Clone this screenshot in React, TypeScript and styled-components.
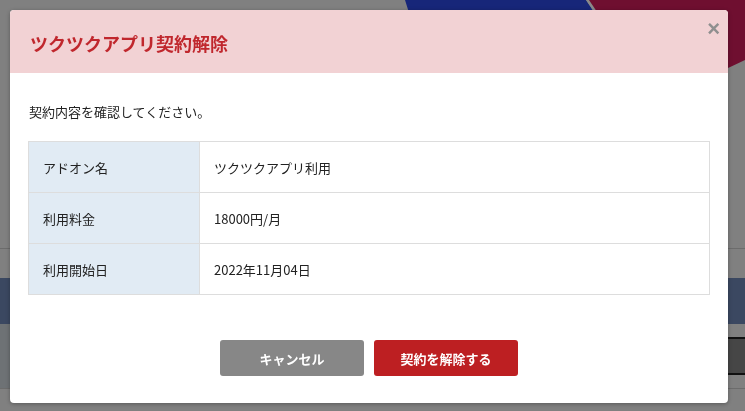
import styled, { createGlobalStyle } from "styled-components";

const GlobalStyle = createGlobalStyle`
  html, body {
    margin: 0;
    padding: 0;
  }
  body {
    font-family: "Noto Sans CJK JP", "Noto Sans", sans-serif;
    color: #333;
  }
`;

const rows = [
  { label: "アドオン名", value: "ツクツクアプリ利用" },
  { label: "利用料金", value: "18000円/月" },
  { label: "利用開始日", value: "2022年11月04日" },
];

const HeroArt = () => (
  <svg width="745" height="248" viewBox="0 0 745 248">
    <polygon points="405,0 586,0 640,80 430,80" fill="#172679" />
    <polygon points="586,0 589,0 643,80 640,80" fill="#8a8a8a" />
    <path d="M589,0 L745,0 L745,60 Q720,72 690,85 L643,80 Z" fill="#6f0f30" />
  </svg>
);

export default function App() {
  return (
    <>
      <GlobalStyle />
      <Page>
        <Hero>
          <HeroArt />
        </Hero>
        <Rule />
        <Gap />
        <NavBar />
        <Section>
          <SidePanel />
          <Filler>
            <DarkBox />
          </Filler>
        </Section>
        <Rule />
      </Page>

      <Modal>
        <Header>
          <Title>ツクツクアプリ契約解除</Title>
          <CloseButton aria-label="close">×</CloseButton>
        </Header>
        <Body>
          <Lead>契約内容を確認してください。</Lead>
          <Table>
            <tbody>
              {rows.map((r) => (
                <tr key={r.label}>
                  <LabelCell>{r.label}</LabelCell>
                  <ValueCell>{r.value}</ValueCell>
                </tr>
              ))}
            </tbody>
          </Table>
          <Actions>
            <Button $variant="cancel">キャンセル</Button>
            <Button $variant="danger">契約を解除する</Button>
          </Actions>
        </Body>
      </Modal>
    </>
  );
}

const Page = styled.div`
  width: 745px;
  height: 411px;
  overflow: hidden;
  background: #808080;
  display: flex;
  flex-direction: column;
`;

const Hero = styled.div`
  height: 248px;
  flex: none;
  svg {
    display: block;
  }
`;

const Rule = styled.div`
  height: 1px;
  flex: none;
  background: #6c6c6c;
`;

const Gap = styled.div`
  height: 29px;
  flex: none;
`;

const NavBar = styled.div`
  height: 46px;
  flex: none;
  background: #3b4861;
`;

const Section = styled.div`
  height: 64px;
  flex: none;
  display: flex;
`;

const SidePanel = styled.div`
  width: 60px;
  background: #6e7275;
`;

const Filler = styled.div`
  flex: 1;
  display: flex;
  justify-content: flex-end;
  padding-top: 13px;
`;

const DarkBox = styled.div`
  width: 120px;
  height: 34px;
  background: #464646;
  border-top: 2px solid #111;
  border-bottom: 2px solid #111;
`;

const Modal = styled.div`
  position: fixed;
  top: 10px;
  left: 10px;
  width: 718px;
  height: 393px;
  background: #fff;
  border-radius: 4px;
  overflow: hidden;
  box-shadow: 0 1px 4px rgba(0, 0, 0, 0.3);
  display: flex;
  flex-direction: column;
`;

const Header = styled.div`
  height: 63px;
  flex: none;
  background: #f2d2d4;
  display: flex;
  align-items: center;
  padding: 0 20px;
  position: relative;
`;

const Title = styled.h2`
  margin: 0;
  font-size: 18px;
  font-weight: 700;
  color: #c0272d;
  line-height: 1;
  padding-top: 2px;
`;

const CloseButton = styled.button`
  position: absolute;
  top: 8px;
  right: 8px;
  border: none;
  background: none;
  padding: 0;
  font-family: "Liberation Sans", Arial, sans-serif;
  font-size: 22px;
  font-weight: 700;
  line-height: 1;
  color: #8f8f8f;
  cursor: pointer;
`;

const Body = styled.div`
  padding: 29px 18px 0;
  display: flex;
  flex-direction: column;
`;

const Lead = styled.p`
  margin: 0;
  font-size: 13px;
  line-height: 20px;
  padding-left: 1px;
  color: #222;
`;

const Table = styled.table`
  margin-top: 19px;
  width: 100%;
  border-collapse: collapse;
  font-size: 13px;
  color: #222;

  td {
    height: 50px;
    padding: 0 14px;
    border: 1px solid #dddddd;
    line-height: 1;
  }
`;

const LabelCell = styled.td`
  width: 171px;
  box-sizing: border-box;
  background: #e1ebf4;
  border-color: #fff #fff #fff #e1ebf4;
`;

const ValueCell = styled.td`
  background: #fff;
`;

const Actions = styled.div`
  margin-top: 45px;
  display: flex;
  justify-content: center;
  gap: 10px;
`;

const Button = styled.button<{ $variant: "cancel" | "danger" }>`
  width: 144px;
  height: 36px;
  border: none;
  border-radius: 3px;
  font-family: "Noto Sans CJK JP", sans-serif;
  font-size: 13px;
  font-weight: 700;
  color: #fff;
  background: ${(p) => (p.$variant === "danger" ? "#bd1f22" : "#878787")};
  cursor: pointer;
`;
